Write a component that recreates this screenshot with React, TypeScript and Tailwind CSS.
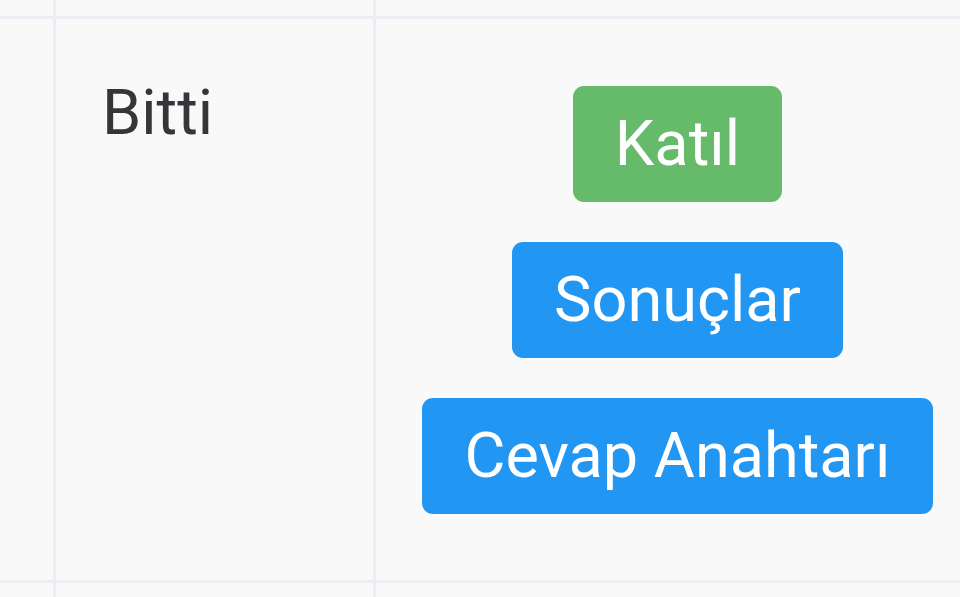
export default function App() {
  const buttons = [
    { label: "Katıl", color: "bg-[#66bb6a]" },
    { label: "Sonuçlar", color: "bg-[#2196f3]" },
    { label: "Cevap Anahtarı", color: "bg-[#2196f3]" },
  ];

  return (
    <div className="h-[597px] w-[960px] overflow-hidden bg-[#f9f9fa] font-['Roboto',sans-serif]">
      {/* previous row */}
      <div className="flex h-[16px]">
        <div className="w-[56px] shrink-0 border-r-[3px] border-[#eceef3]" />
        <div className="w-[320px] shrink-0 border-r-[3px] border-[#eceef3]" />
        <div className="w-[603px] shrink-0" />
      </div>

      {/* status row */}
      <div className="flex h-[567px] border-y-[3px] border-[#eceef3]">
        <div className="w-[56px] shrink-0 border-r-[3px] border-[#eceef3]" />
        <div className="w-[320px] shrink-0 border-r-[3px] border-[#eceef3] pl-[46px] pt-[59px]">
          <p className="text-[63px] leading-[70px] text-[#35363a]">Bitti</p>
        </div>
        <div className="flex w-[603px] shrink-0 flex-col items-center gap-[40px] pt-[67px]">
          {buttons.map((b) => (
            <button
              key={b.label}
              className={`${b.color} rounded-[11px] px-[42px] py-[23px] text-[63px] leading-[70px] text-white`}
            >
              {b.label}
            </button>
          ))}
        </div>
      </div>

      {/* next row */}
      <div className="flex h-[20px]">
        <div className="w-[56px] shrink-0 border-r-[3px] border-[#eceef3]" />
        <div className="w-[320px] shrink-0 border-r-[3px] border-[#eceef3]" />
        <div className="w-[603px] shrink-0" />
      </div>
    </div>
  );
}
